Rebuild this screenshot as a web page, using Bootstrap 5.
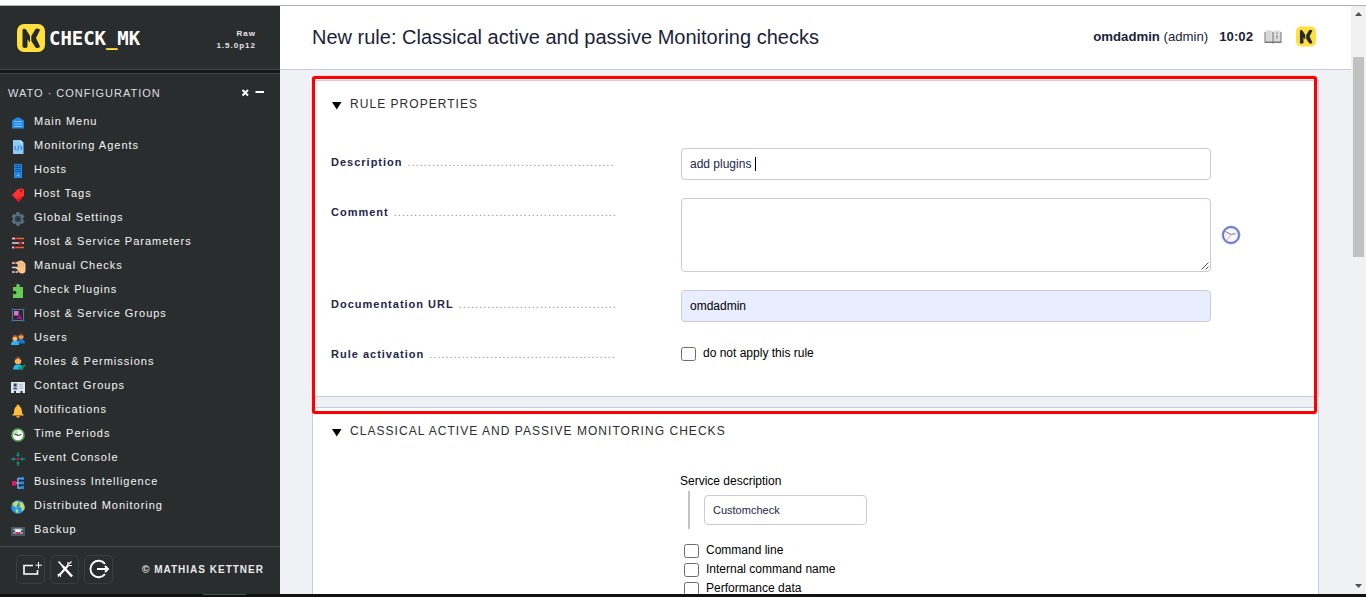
<!DOCTYPE html>
<html lang="en">
<head>
<meta charset="utf-8">
<title>New rule: Classical active and passive Monitoring checks</title>
<link href="https://cdn.jsdelivr.net/npm/bootstrap@5.3.0/dist/css/bootstrap.min.css" rel="stylesheet">
<style>
html,body{height:100%}
body{font-family:"Liberation Sans",Arial,sans-serif;font-size:12px;line-height:1.2;color:#000;background:#fff;overflow:hidden}
.top-strip{height:6px;border-bottom:1px solid #b1b1b1}
.bottom-strip{height:3px;background:#111213}
.bottom-strip span{width:43px;height:1px;margin-left:203px;background:#4a4d4e}
.min-h-0{min-height:0}
.min-w-0{min-width:0}
.side{width:280px;background:#2a2d2e;color:#fff}
.side-head{height:64px;border-bottom:1px solid #45494b;padding:0 24px 0 17px}
.brand{font:bold 19px/20px "DejaVu Sans Mono",monospace;letter-spacing:-.06px}
.brand i{color:#ffe03f;font-style:normal}
.version{font-size:8px;line-height:12px;letter-spacing:1px;color:#e6e6e6;padding-top:5px}
.side-gap{height:3px;background:#141617}
.snapin{border-top:1px solid #3e4243;border-bottom:1px solid #464a4c;min-height:0}
.snapin-title{height:36px;padding:3px 16px 0 8px;font-size:11px;letter-spacing:1px;color:#dcdfe0}
.snapin-title svg{margin-bottom:3px}
.wato-nav{font-size:11px;letter-spacing:1px;color:#f4f4f4}
.wato-nav li{height:24px;padding-left:10px;gap:8px}
.wato-nav svg{margin-top:2px}
.side-foot{height:47px;padding:0 16px 2px 16px}
.foot-btn{width:29px;height:29px;border:1px solid #3a3e3f;border-radius:5px}
.copy{font-size:10px;letter-spacing:1px;color:#e8eaea}
.page-head{height:64px;border-bottom:1px solid #c9cadb;padding:0 35px 2px 32px;color:#1b1f3b}
.page-head h1{font-size:20px;font-weight:400;line-height:24px}
.user-info{font-size:13.2px}
.clock-now{margin-left:11px}
.book{margin-left:11px}
.mini-logo{margin-left:14px}
.page-main{background:#eff1f4;padding:10px 32px 0;overflow:hidden}
.rule-box{border:1px solid #c9cadb;background:#fff;padding:0 18px}
.rule-box-1{height:317px}
.rule-box-2{height:200px;margin-top:10px}
.rule-box h2{font-size:12px;font-weight:400;letter-spacing:1.04px;line-height:14px;color:#2d2d2d}
.box-title{padding-top:16px}
.tri{margin:3px 8px 0 1px}
.form-lines{gap:18px;padding-top:37px}
.line-label{width:350px;font-size:11px;line-height:28px;letter-spacing:1px;color:#8f8f8f}
.line-label b{color:#24264a;margin-right:1px}
.field{width:530px;border:1px solid #c9cadb;border-radius:4px;background:#fff;color:#24264a;font-size:12px;padding:0 8px}
.field-32{height:32px}
.comment-field{height:74px;padding:0 1px 1px 0}
.autofilled{background:#e8eefe;color:#000}
.caret{width:1px;height:14px;background:#000;margin-left:4px}
.clock-icon{margin-left:10px}
.act{height:28px;gap:7px}
.act span:last-child{margin-bottom:2px}
.box{width:15px;height:14px;border:1px solid #6c6c6c;border-radius:2.5px;background:#fff}
.params{margin-left:349px;padding-top:36px}
.param-name{line-height:14px;margin-bottom:3px}
.sub-field{border-left:2px solid #c4c4c4;height:38px;margin-left:8px;padding:4px 0 0 14px}
.small-field{width:163px;height:30px;font-size:11px;padding-top:2px}
.checks{gap:4px;margin:14px 0 0 4px}
.opt{gap:7px;line-height:14px}
.opt .box{margin-top:1px}
.scroll{width:15px;background:#f1f1f1}
.arrow-up{margin-top:6px}
.thumb{width:11px;height:200px;background:#c1c1c1;margin-top:41px}
.arrow-down{margin-bottom:6px}
.mark-frame{position:absolute;left:312px;top:76px;width:1005px;height:338px;border:3px solid #fe0000;border-radius:3px;box-shadow:0 0 1px rgba(255,0,0,.6)}
</style>
</head>
<body class="d-flex flex-column">
<svg width="0" height="0" class="position-absolute"><defs>
<symbol id="logo" viewBox="0 0 28 28"><rect width="28" height="28" rx="7" fill="#ffe03f"/><path d="M5.500 23V5.500Q7 4 9 5.500L13 12V18.500L10.500 15.500V23Q8 25 5.500 23ZM14.300 12L18.500 5Q21 3.800 23 6L19 14L23 22.500Q21.500 25 18.500 23.500L14.300 17Z" fill="#262a2b"/></symbol>
</defs></svg>
<div class="top-strip flex-shrink-0"></div>
<div class="d-flex flex-fill min-h-0">
  <aside class="side d-flex flex-column flex-shrink-0">
    <div class="side-head d-flex align-items-center flex-shrink-0">
      <svg width="28" height="28"><use href="#logo"/></svg>
      <div class="brand ms-1">CHECK<i>_</i>MK</div>
      <div class="version ms-auto text-end fw-bold">Raw<br>1.5.0p12</div>
    </div>
    <div class="side-gap flex-shrink-0"></div>
    <div class="snapin flex-fill">
      <div class="snapin-title d-flex align-items-center">
        <span>WATO · CONFIGURATION</span>
        <svg class="ms-auto" width="23" height="9" viewBox="0 0 23 9"><path d="M1.500 2L7 7.500M7 2L1.500 7.500" stroke="#fff" stroke-width="2"/><path d="M14.500 4H23" stroke="#fff" stroke-width="2"/></svg>
      </div>
      <ul class="wato-nav list-unstyled mb-0">
        <li class="d-flex align-items-center"><svg width="16" height="16"><path d="M2 5.500L8 2L14 5.500V13.500H2Z" fill="#1e88f0"/><path d="M4 6.500H12M4 9H12M4 11.500H12" stroke="#8cc4fa"/></svg>Main Menu</li>
        <li class="d-flex align-items-center"><svg width="16" height="16"><path d="M3 1H10.500L13.500 4V15H3Z" fill="#90caf9"/><path d="M10.500 1V4H13.500Z" fill="#e3f2fd"/><path d="M6 7L4.500 9L6 11M10.500 7L12 9L10.500 11M9 6.500L7.500 11.500" stroke="#1976d2" fill="none"/></svg>Monitoring Agents</li>
        <li class="d-flex align-items-center"><svg width="16" height="16"><rect x="4" y="1" width="8" height="14" fill="#1e88e5"/><path d="M5 2.500H11M5 4.500H11M5 6.500H11M5 8.500H11" stroke="#0d4f96"/><circle cx="8" cy="12.500" r=".8" fill="#bbdefb"/></svg>Hosts</li>
        <li class="d-flex align-items-center"><svg width="16" height="16"><path d="M2 8L8 2L12.500 1.500L14 3V8.500L8.500 15Z" fill="#ff3030"/><path d="M2 8L8.500 15L14 8.500L7.500 12Z" fill="#e0102a"/><circle cx="11" cy="3.800" r="1" fill="#5d2020"/></svg>Host Tags</li>
        <li class="d-flex align-items-center"><svg width="16" height="16"><path d="M6.500 1H9.500L10 3.500L12.500 3L14.500 5.500L13 7.500V8.500L14.500 10.500L12.500 13L10 12.500L9.500 15H6.500L6 12.500L3.500 13L1.500 10.500L3 8.500V7.500L1.500 5.500L3.500 3L6 3.500Z" fill="#546e7a"/><circle cx="8" cy="8" r="3.200" fill="#37474f"/><circle cx="8" cy="8" r="1.500" fill="#252b2e"/></svg>Global Settings</li>
        <li class="d-flex align-items-center"><svg width="16" height="16"><path d="M2 3.500H14M2 12.500H14" stroke="#ff5a36" stroke-width="1.300"/><path d="M2 3.500H5M2 8H14M2 12.500H4" stroke="#d5d9dc" stroke-width="1.500"/><path d="M5 2L7 3.500L5 5ZM9 6.500H12V9.500H9ZM4 11L6 12.500L4 14Z" fill="#e0101c"/></svg>Host &amp; Service Parameters</li>
        <li class="d-flex align-items-center"><svg width="16" height="16"><path d="M2 4H9M2 8.500H8M2 13H8" stroke="#d5d9dc" stroke-width="1.500"/><path d="M4 3L6 2V5ZM4 13L6 11V14Z" fill="#e0101c"/><path d="M7 2.500L10 2V1.500H11.500L14 3L15.500 5V11Q15.500 14.500 12 14.500Q9 14.500 7.500 11L5.500 8.500L8 8.500Z" fill="#ffc58a"/><path d="M9.500 3V8M11.500 3V8M13.500 4V8" stroke="#e9a368" stroke-width=".7"/></svg>Manual Checks</li>
        <li class="d-flex align-items-center"><svg width="16" height="16"><path d="M3 4H6.500Q5.500 1 8 1Q10.500 1 9.500 4H13V15H3V11Q6.500 12 6.500 9.500Q6.500 7 3 8Z" fill="#66cc55"/></svg>Check Plugins</li>
        <li class="d-flex align-items-center"><svg width="16" height="16"><rect x="2.500" y="2.500" width="11" height="11" fill="none" stroke="#66757e"/><path d="M1.500 1.500H3.500V3.500H1.500ZM12.500 1.500H14.500V3.500H12.500ZM1.500 12.500H3.500V14.500H1.500ZM12.500 12.500H14.500V14.500H12.500Z" fill="#1565c0"/><rect x="4" y="4" width="4.500" height="4.500" fill="#d872dc"/><path d="M6.500 12L9.500 7.500L12.500 12Z" fill="#a90aa5"/></svg>Host &amp; Service Groups</li>
        <li class="d-flex align-items-center"><svg width="16" height="16"><path d="M7 12.500Q7 8 11 8Q15 8 15 12.500Z" fill="#1976d2"/><circle cx="11" cy="5.500" r="2.600" fill="#f09a4a"/><path d="M8.500 5Q8.500 2 11 2Q14 2 13.500 5L11 4Z" fill="#5d3b2a"/><path d="M1 14Q1 9.500 5 9.500Q9 9.500 9 14Z" fill="#29b6f6"/><circle cx="5" cy="7.500" r="2.500" fill="#ffb870"/><path d="M2.500 7Q2.500 4 5 4Q8 4 7.500 7L5 5.500Z" fill="#b5502a"/></svg>Users</li>
        <li class="d-flex align-items-center"><svg width="16" height="16"><path d="M3 14.500Q3 9.500 8 9.500Q13 9.500 13 14.500Z" fill="#29b6f6"/><circle cx="8" cy="6" r="3.300" fill="#ffb757"/><path d="M4.800 5.500Q4.800 1.500 8 1.500Q11.500 1.500 11.200 5.500L8 3Z" fill="#6b4433"/><path d="M8.500 12L10.500 14L15 10" fill="none" stroke="#0a9b52" stroke-width="1.800"/></svg>Roles &amp; Permissions</li>
        <li class="d-flex align-items-center"><svg width="16" height="16"><path d="M1 3H15V14H12.500V12H10.500V14H6V12H4V14H1Z" fill="#dfe6ef"/><rect x="3" y="4" width="4.500" height="6.500" fill="#a7b6c8"/><circle cx="5.200" cy="6" r="1.500" fill="#4b4147"/><path d="M3 10.500Q5 6.500 7.500 10.500Z" fill="#4b6280"/><path d="M9 5.500H13M9 7.500H13M9 9.500H13" stroke="#aab9cf"/></svg>Contact Groups</li>
        <li class="d-flex align-items-center"><svg width="16" height="16"><circle cx="8" cy="3" r="1.500" fill="#ffb020"/><path d="M2 12.500L4 10Q4 3 8 3Q12 3 12 10L14 12.500Z" fill="#ffc03c"/><path d="M6 13H10Q9.500 15 8 15Q6.500 15 6 13Z" fill="#e59a18"/></svg>Notifications</li>
        <li class="d-flex align-items-center"><svg width="16" height="16"><circle cx="8" cy="8" r="6" fill="#fff" stroke="#5aa858" stroke-width="1.700"/><path d="M8 8V2.800A5.200 5.200 0 0 0 2.800 8Z" fill="#b5e8b0"/><path d="M4.500 7L8 8.500L11.500 7.500" fill="none" stroke="#333" stroke-width="1.100"/></svg>Time Periods</li>
        <li class="d-flex align-items-center"><svg width="16" height="16"><rect x="6.800" y="6.800" width="2.400" height="2.400" fill="#e0104a"/><path d="M8 1V5M8 11V15M1 8H5M11 8H15" stroke="#0a8f80" stroke-width="1.500"/><path d="M5.800 3.500H10.200L8 6ZM5.800 12.500H10.200L8 10ZM3.500 5.800V10.200L6 8ZM12.500 5.800V10.200L10 8Z" fill="#0a8f80"/></svg>Event Console</li>
        <li class="d-flex align-items-center"><svg width="16" height="16"><path d="M4 8H11M12 3.500H8V13H12" fill="none" stroke="#78aee0" stroke-width="1.500"/><rect x="2" y="6" width="4" height="4.500" fill="#f0106a"/><path d="M10.500 2H14V5H10.500ZM10.500 6.500H14V9.500H10.500ZM10.500 11H14V14H10.500Z" fill="#1e88f0"/></svg>Business Intelligence</li>
        <li class="d-flex align-items-center"><svg width="16" height="16"><circle cx="8" cy="8" r="6.800" fill="#2196f3"/><path d="M2 5L6 2L8.500 2.500L8 5L6.500 6.500L7 9L5 8L3 6ZM9 3L12.500 3.500L14.500 7V10L12 12.500L11.500 9L9.500 8L10 5ZM5.500 10L8.500 11L7.500 14.500L6 13Z" fill="#cddc55"/></svg>Distributed Monitoring</li>
        <li class="d-flex align-items-center"><svg width="16" height="16"><rect x="1" y="4" width="14" height="9" fill="#455a64"/><rect x="3" y="5.500" width="10" height="5.500" rx="2" fill="#a8b6bc"/><rect x="5.500" y="6.500" width="5" height="2.500" fill="#fff"/><path d="M5.500 9H10.500V11H5.500Z" fill="#e0305a"/><circle cx="4" cy="8.200" r="1" fill="#333"/><circle cx="12" cy="8.200" r="1" fill="#333"/></svg>Backup</li>
      </ul>
    </div>
    <div class="side-foot d-flex align-items-center flex-shrink-0">
      <div class="d-flex" style="gap:5px">
        <div class="foot-btn"><svg width="27" height="27" fill="none" stroke="#fff"><path d="M16 9.500H7V18H20.500V14" stroke-width="1.600"/><path d="M21.500 6V12.500M18.500 9.200H25" stroke-width="1"/></svg></div>
        <div class="foot-btn"><svg width="27" height="27" fill="none" stroke="#fff"><path d="M7.500 5.500L12 10.500" stroke-width="1.600"/><path d="M11.500 10L21 20.500" stroke-width="2.600"/><path d="M17.500 9L8.500 19" stroke-width="2"/><path d="M20.500 5.500L18 8M17 6V9.500H21M9.500 17.500L7 20.500M6.500 18.500H9.500V21" stroke-width="1.200"/></svg></div>
        <div class="foot-btn"><svg width="27" height="27" fill="none" stroke="#fff" stroke-width="1.900"><path d="M20 7.800A8.200 8.200 0 1 0 20 18.200M12 13H23M20 10L23 13L20 16"/></svg></div>
      </div>
      <div class="copy ms-auto fw-bold">© MATHIAS KETTNER</div>
    </div>
  </aside>
  <div class="d-flex flex-column flex-fill min-w-0">
    <header class="page-head d-flex align-items-center flex-shrink-0">
      <h1 class="mb-0">New rule: Classical active and passive Monitoring checks</h1>
      <div class="user-info d-flex align-items-center ms-auto">
        <span><b>omdadmin</b> (admin)</span><b class="clock-now">10:02</b>
        <svg class="book" width="18" height="14" viewBox="0 0 18 14"><path d="M.5 2V13H8L9 13.800L10 13H17.500V2" fill="#777"/><path d="M1.500 .5H8.500V11.500H1.500ZM9.500 .5H16.500V11.500H9.500Z" fill="#ddd"/><path d="M3.500 .5V11M5.500 .5V11" stroke="#cacaca" stroke-width=".7"/><path d="M13 2.500V4M13 5V8.500" stroke="#999" stroke-width="1.500"/></svg>
        <svg class="mini-logo" width="20" height="21"><use href="#logo"/></svg>
      </div>
    </header>
    <main class="page-main flex-fill">
      <section class="rule-box rule-box-1">
        <div class="d-flex align-items-center box-title"><svg width="10" height="8" class="tri"><path d="M0 0H9.500L4.750 7.500Z"/></svg><h2 class="mb-0">RULE PROPERTIES</h2></div>
        <div class="d-flex flex-column form-lines">
          <div class="d-flex"><div class="line-label"><b>Description</b> ...................................................</div><div class="field field-32 d-flex align-items-center">add plugins<span class="caret"></span></div></div>
          <div class="d-flex"><div class="line-label"><b>Comment</b> .......................................................</div>
            <div class="field comment-field d-flex align-items-end justify-content-end"><svg width="8" height="8" stroke="#555"><path d="M.5 7.500L7.500 .5M4.500 7.500L7.500 4.500" /></svg></div>
            <svg class="align-self-center clock-icon" width="20" height="20" viewBox="0 0 20 20"><circle cx="10" cy="10" r="8" fill="#f5f5fa" stroke="#6a76d8" stroke-width="2"/><circle cx="10" cy="10" r="9" fill="none" stroke="#8f92b8" stroke-width=".7"/><path d="M4.500 6.500L10 9.500L14.500 8.500" fill="none" stroke="#778" /><path d="M10 9.500L6 15" stroke="#f4a0a8"/></svg></div>
          <div class="d-flex"><div class="line-label"><b>Documentation URL</b> .......................................</div><div class="field field-32 autofilled d-flex align-items-center">omdadmin</div></div>
          <div class="d-flex"><div class="line-label"><b>Rule activation</b> ..............................................</div><div class="d-flex align-items-center act"><span class="box"></span><span>do not apply this rule</span></div></div>
        </div>
      </section>
      <section class="rule-box rule-box-2">
        <div class="d-flex align-items-center box-title"><svg width="10" height="8" class="tri"><path d="M0 0H9.500L4.750 7.500Z"/></svg><h2 class="mb-0">CLASSICAL ACTIVE AND PASSIVE MONITORING CHECKS</h2></div>
        <div class="params">
          <div class="param-name">Service description</div>
          <div class="sub-field"><div class="field small-field d-flex align-items-center">Customcheck</div></div>
          <div class="d-flex flex-column checks">
            <div class="d-flex opt"><span class="box"></span><span>Command line</span></div>
            <div class="d-flex opt"><span class="box"></span><span>Internal command name</span></div>
            <div class="d-flex opt"><span class="box"></span><span>Performance data</span></div>
          </div>
        </div>
      </section>
    </main>
  </div>
  <div class="scroll flex-shrink-0 d-flex flex-column align-items-center">
    <svg width="7" height="4" class="arrow-up"><path d="M0 4L3.500 0L7 4Z" fill="#505050"/></svg>
    <div class="thumb"></div>
    <svg width="7" height="4" class="mt-auto arrow-down"><path d="M0 0H7L3.500 4Z" fill="#505050"/></svg>
  </div>
</div>
<div class="bottom-strip flex-shrink-0 d-flex align-items-start"><span></span></div>
<div class="mark-frame"></div>
<script src="https://cdn.jsdelivr.net/npm/bootstrap@5.3.0/dist/js/bootstrap.bundle.min.js"></script>
</body>
</html>
